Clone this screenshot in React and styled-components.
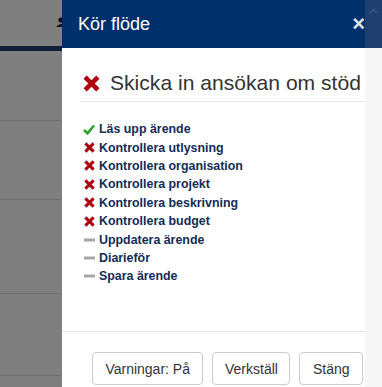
import React from 'react';
import styled, { createGlobalStyle } from 'styled-components';

const GlobalStyle = createGlobalStyle`
  html, body {
    margin: 0;
    padding: 0;
    width: 382px;
    height: 387px;
    overflow: hidden;
    font-family: "Liberation Sans", Arial, sans-serif;
  }
`;

const Page = styled.div`
  position: relative;
  width: 382px;
  height: 387px;
  background: #fff;
  overflow: hidden;
`;

const SiteHeader = styled.div`
  height: 46px;
  box-sizing: content-box;
  background: #fff;
  border-bottom: 5px solid #1f3f74;
  display: flex;
  align-items: flex-start;
  padding-left: 56px;
`;

const UserIcon = styled.span`
  margin-top: 17px;
  display: inline-flex;
`;

const Row = styled.div`
  height: ${p => p.$h}px;
  border-bottom: 1px solid #dcdcdc;
`;

const Backdrop = styled.div`
  position: absolute;
  inset: 0;
  background: rgba(0, 0, 0, 0.5);
`;

const Modal = styled.div`
  position: absolute;
  top: 0;
  left: 62px;
  width: 318px;
  background: #fff;
  display: flex;
  flex-direction: column;
`;

const ModalHeader = styled.div`
  height: 48px;
  box-sizing: border-box;
  background: #00306b;
  display: flex;
  align-items: center;
  justify-content: space-between;
  padding: 0 15px 0 16px;
`;

const Title = styled.h4`
  margin: 0;
  color: #fff;
  font-size: 18px;
  font-weight: normal;
`;

const Close = styled.span`
  color: #fff;
  opacity: 0.85;
  font-size: 22px;
  font-weight: bold;
  line-height: 1;
`;

const ModalBody = styled.div`
  height: 284px;
  box-sizing: border-box;
  padding: 23px 15px 0 18px;
  border-bottom: 1px solid #e5e5e5;
`;

const Heading = styled.h3`
  margin: 0;
  padding: 0 0 6px 3px;
  border-bottom: 1px solid #e5e5e5;
  display: flex;
  align-items: center;
  gap: 10px;
  font-size: 21.1px;
  font-weight: normal;
  color: #333;
  white-space: nowrap;
  overflow: hidden;
  svg { flex-shrink: 0; }
`;

const List = styled.ul`
  list-style: none;
  margin: 18px 0 0 0;
  padding: 0 0 0 3px;
`;

const Item = styled.li`
  display: flex;
  align-items: center;
  gap: 4px;
  height: 18.4px;
  font-size: 12.4px;
  font-weight: bold;
  color: #142b57;
`;

const IconBox = styled.span`
  width: 12px;
  flex-shrink: 0;
  display: inline-flex;
  justify-content: center;
`;

const ModalFooter = styled.div`
  height: 60px;
  display: flex;
  justify-content: flex-end;
  align-items: flex-start;
  gap: 9px;
  padding: 20px 17px 0 0;
`;

const Button = styled.button`
  height: 33px;
  padding: 0 ${p => p.$px || 12}px;
  border: 1px solid #ccc;
  border-radius: 4px;
  background: #fff;
  color: #333;
  font-family: "Liberation Sans", Arial, sans-serif;
  font-size: 14px;
`;

const Scrollbar = styled.div`
  position: absolute;
  top: 0;
  right: 0;
  width: 17px;
  height: 387px;
  display: flex;
  flex-direction: column;
`;

const ScrollTop = styled.div`
  height: 48px;
  background: #1f3f6e;
  display: flex;
  justify-content: center;
  padding-top: 8px;
  box-sizing: border-box;
`;

const ScrollTrack = styled.div`
  flex: 1;
  background: #f6f6f6;
`;

const Cross = ({ size = 11 }) => (
  <svg width={size} height={size} viewBox="0 0 12 12">
    <path d="M1.5 1.5 L10.5 10.5 M10.5 1.5 L1.5 10.5" stroke="#b0000e" strokeWidth="3.2" strokeLinecap="butt" />
  </svg>
);

const Check = () => (
  <svg width="12" height="11" viewBox="0 0 12 11">
    <path d="M1 6 L4.5 9.3 L11 1.5" stroke="#2aa12a" strokeWidth="2.6" fill="none" />
  </svg>
);

const Dash = () => (
  <svg width="11" height="4" viewBox="0 0 11 4">
    <rect x="0" y="0.5" width="11" height="3" fill="#a6a6a6" />
  </svg>
);

const steps = [
  { s: 'ok', t: 'Läs upp ärende' },
  { s: 'err', t: 'Kontrollera utlysning' },
  { s: 'err', t: 'Kontrollera organisation' },
  { s: 'err', t: 'Kontrollera projekt' },
  { s: 'err', t: 'Kontrollera beskrivning' },
  { s: 'err', t: 'Kontrollera budget' },
  { s: 'todo', t: 'Uppdatera ärende' },
  { s: 'todo', t: 'Diarieför' },
  { s: 'todo', t: 'Spara ärende' },
];

export default function App() {
  return (
    <Page>
      <GlobalStyle />
      <SiteHeader>
        <UserIcon>
          <svg width="10" height="10" viewBox="0 0 10 10">
            <circle cx="5" cy="3" r="2.6" fill="#222" />
            <path d="M0 10 Q5 4 10 10 Z" fill="#222" />
          </svg>
        </UserIcon>
      </SiteHeader>
      <Row $h={69} />
      <Row $h={78} />
      <Row $h={93} />
      <Row $h={81} />
      <Backdrop />
      <Modal>
        <ModalHeader>
          <Title>Kör flöde</Title>
          <Close>×</Close>
        </ModalHeader>
        <ModalBody>
          <Heading>
            <Cross size={17} />
            Skicka in ansökan om stöd
          </Heading>
          <List>
            {steps.map(st => (
              <Item key={st.t}>
                <IconBox>
                  {st.s === 'ok' ? <Check /> : st.s === 'err' ? <Cross /> : <Dash />}
                </IconBox>
                {st.t}
              </Item>
            ))}
          </List>
        </ModalBody>
        <ModalFooter>
          <Button $px={12.5}>Varningar: På</Button>
          <Button $px={11.5}>Verkställ</Button>
          <Button $px={12.5}>Stäng</Button>
        </ModalFooter>
      </Modal>
      <Scrollbar>
        <ScrollTop>
          <svg width="9" height="6" viewBox="0 0 9 6">
            <path d="M1 5 L4.5 1.5 L8 5" stroke="#3e5a85" strokeWidth="1.4" fill="none" />
          </svg>
        </ScrollTop>
        <ScrollTrack />
      </Scrollbar>
    </Page>
  );
}
